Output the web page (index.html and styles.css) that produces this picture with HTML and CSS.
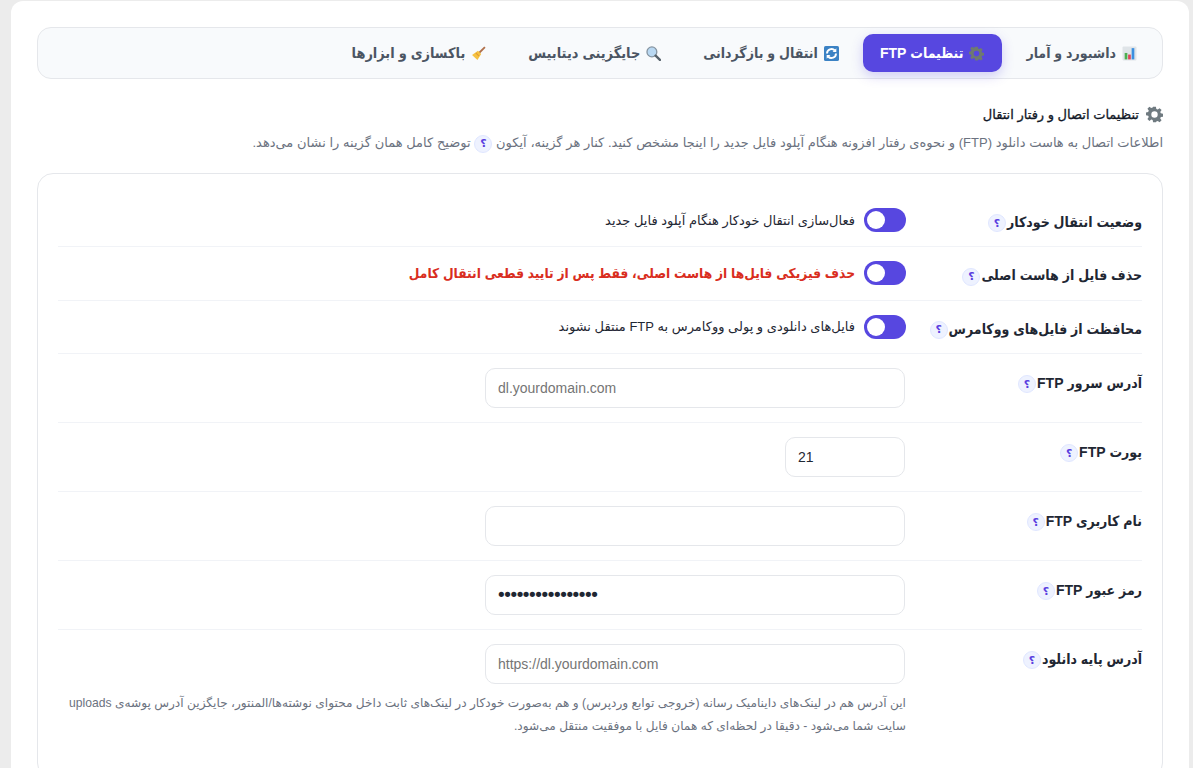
FILE: index.html
```html
<!DOCTYPE html>
<html lang="fa" dir="rtl">
<head>
<meta charset="utf-8">
<title>تنظیمات FTP</title>
<link rel="stylesheet" href="styles.css">
</head>
<body>
<main class="panel">
  <nav class="tabs">
    <a class="tab"><svg class="ico" viewBox="0 0 14 14"><rect x="0.5" y="0.5" width="13" height="13" rx="1" fill="#dfe4e8"/><rect x="2.500" y="6.500" width="2.500" height="6" fill="#4caf50"/><rect x="5.700" y="8" width="2.500" height="4.500" fill="#e0445a"/><rect x="9" y="2" width="2.500" height="10.500" fill="#3b8fe0"/></svg>داشبورد و آمار</a>
    <a class="tab active"><svg class="ico" viewBox="0 0 24 24"><path fill="#6f7a70" fill-rule="evenodd" d="M10 1h4l.6 3.100 2 .8L19.200 3 22 5.800l-1.900 2.600.8 2 3.100.6v4l-3.100.6-.8 2 1.900 2.600-2.800 2.800-2.600-1.900-2 .8L14 23h-4l-.6-3.100-2-.8L4.800 21 2 18.200l1.900-2.600-.8-2L0 13V9l3.100-.6.8-2L2 3.800 4.800 1l2.600 1.900 2-.8z M12 7.500a4.500 4.500 0 1 0 0 9 4.500 4.500 0 0 0 0-9z"/></svg>تنظیمات FTP</a>
    <a class="tab"><svg class="ico" viewBox="0 0 14 14"><rect width="14" height="14" rx="1.500" fill="#3b82c4"/><path d="M2.800 7a4.200 4.200 0 0 1 7.300-2.800M11.200 7a4.200 4.200 0 0 1-7.300 2.800" fill="none" stroke="#fff" stroke-width="1.800"/><path d="M11.500 2v3.500H8zM2.500 12V8.500H6z" fill="#fff"/></svg>انتقال و بازگردانی</a>
    <a class="tab tab-wide"><svg class="ico" viewBox="0 0 14 14"><circle cx="5.500" cy="5.500" r="4.600" fill="#b9d8f2" stroke="#8594a1" stroke-width="1.200"/><path d="M9 9l4 4" stroke="#56616b" stroke-width="2.200" stroke-linecap="round"/></svg>جایگزینی دیتابیس</a>
    <a class="tab tab-wide"><svg class="ico" viewBox="0 0 14 14"><path d="M13 1L7 7" stroke="#b0704a" stroke-width="1.700"/><path d="M6.500 4.500l3 3-3.500 5.500L1 8.500z" fill="#f5c242"/><path d="M4.500 6.500l3 3" stroke="#e39a2e"/></svg>باکسازی و ابزارها</a>
  </nav>

  <header class="intro">
    <h2 class="intro-title"><svg class="gear" viewBox="0 0 24 24"><path fill="#6f7a80" fill-rule="evenodd" d="M10 1h4l.6 3.100 2 .8L19.200 3 22 5.800l-1.900 2.600.8 2 3.100.6v4l-3.100.6-.8 2 1.900 2.600-2.800 2.800-2.600-1.900-2 .8L14 23h-4l-.6-3.100-2-.8L4.800 21 2 18.200l1.900-2.600-.8-2L0 13V9l3.100-.6.8-2L2 3.800 4.800 1l2.600 1.900 2-.8z M12 7.500a4.500 4.500 0 1 0 0 9 4.500 4.500 0 0 0 0-9z"/></svg>تنظیمات اتصال و رفتار انتقال</h2>
    <p class="intro-text">اطلاعات اتصال به هاست دانلود (FTP) و نحوه‌ی رفتار افزونه هنگام آپلود فایل جدید را اینجا مشخص کنید. کنار هر گزینه، آیکون <span class="help">؟</span> توضیح کامل همان گزینه را نشان می‌دهد.</p>
  </header>

  <section class="card">
    <div class="row row-toggle">
      <div class="label">وضعیت انتقال خودکار<span class="help">؟</span></div>
      <div class="field toggle-field"><span class="switch"></span><span class="switch-text">فعال‌سازی انتقال خودکار هنگام آپلود فایل جدید</span></div>
    </div>
    <div class="row row-toggle">
      <div class="label">حذف فایل از هاست اصلی<span class="help">؟</span></div>
      <div class="field toggle-field"><span class="switch"></span><span class="switch-text danger">حذف فیزیکی فایل‌ها از هاست اصلی، فقط پس از تایید قطعی انتقال کامل</span></div>
    </div>
    <div class="row row-toggle">
      <div class="label">محافظت از فایل‌های ووکامرس<span class="help">؟</span></div>
      <div class="field toggle-field"><span class="switch"></span><span class="switch-text">فایل‌های دانلودی و پولی ووکامرس به FTP منتقل نشوند</span></div>
    </div>
    <div class="row">
      <div class="label">آدرس سرور FTP<span class="help">؟</span></div>
      <div class="field"><input class="input" dir="ltr" type="text" placeholder="dl.yourdomain.com"></div>
    </div>
    <div class="row">
      <div class="label">پورت FTP<span class="help">؟</span></div>
      <div class="field"><input class="input input-short" dir="ltr" type="text" value="21"></div>
    </div>
    <div class="row">
      <div class="label">نام کاربری FTP<span class="help">؟</span></div>
      <div class="field"><input class="input" dir="ltr" type="text"></div>
    </div>
    <div class="row">
      <div class="label">رمز عبور FTP<span class="help">؟</span></div>
      <div class="field"><input class="input input-pass" dir="ltr" type="password" value="abcdefghijklmnop"></div>
    </div>
    <div class="row row-last">
      <div class="label">آدرس پایه دانلود<span class="help">؟</span></div>
      <div class="field">
        <input class="input" dir="ltr" type="text" placeholder="https://dl.yourdomain.com">
        <p class="note">این آدرس هم در لینک‌های داینامیک رسانه (خروجی توابع وردپرس) و هم به‌صورت خودکار در لینک‌های ثابت داخل محتوای نوشته‌ها/المنتور، جایگزین آدرس پوشه‌ی uploads سایت شما می‌شود - دقیقا در لحظه‌ای که همان فایل با موفقیت منتقل می‌شود.</p>
      </div>
    </div>
  </section>
</main>
</body>
</html>
```
FILE: styles.css
```css
* { box-sizing: border-box; }
html, body { height: 100%; }
body {
  margin: 0;
  padding: 1px 4px 0 11px;
  background: #ececec;
  font-family: "Liberation Sans", "DejaVu Sans", sans-serif;
  color: #1f2733;
  overflow: hidden;
}
.panel {
  background: #fff;
  border-radius: 12px 12px 0 0;
  padding: 26px 26px 0;
  min-height: 800px;
}
.tabs {
  display: flex;
  justify-content: flex-start;
  align-items: center;
  height: 52px;
  padding: 0 7px;
  gap: 6px;
  background: #f8fafc;
  border: 1px solid #e5e7eb;
  border-radius: 14px;
}
.tab {
  display: flex;
  align-items: center;
  gap: 6px;
  height: 38px;
  padding: 0 18px;
  border-radius: 10px;
  font-family: "Liberation Sans", "DejaVu Sans Condensed", sans-serif;
  font-size: 14px;
  font-weight: 700;
  color: #4b5563;
}
.tab-wide { font-size: 14.400px; }
.tab.active {
  padding-left: 17px;
  background: #5747e0;
  color: #fff;
  box-shadow: 0 4px 12px rgba(87, 71, 224, .25);
}
.ico { width: 15px; height: 15px; flex: none; }
.intro { margin-top: 25px; }
.intro-title {
  display: flex;
  align-items: center;
  gap: 7px;
  margin: 0;
  height: 20px;
  font-size: 13px;
  font-weight: 400;
  color: #111827;
  -webkit-text-stroke: .3px #111827;
}
.gear { width: 17px; height: 17px; flex: none; }
.intro-text {
  margin: 9px 0 0;
  font-size: 13px;
  line-height: 20px;
  word-spacing: .1px;
  color: #6b7280;
}
.help {
  display: inline-flex;
  align-items: center;
  justify-content: center;
  width: 18px;
  height: 18px;
  border-radius: 50%;
  background: #eef2ff;
  border: 1px solid #e0e7ff;
  color: #5b3fe0;
  font-family: "DejaVu Sans", sans-serif;
  font-size: 11px;
  font-weight: 700;
  vertical-align: middle;
}
.card {
  margin-top: 20px;
  border: 1px solid #e5e7eb;
  border-radius: 16px;
  padding: 20px 20px 26px;
}
.row {
  display: grid;
  grid-template-columns: 236px 1fr;
  padding: 14px 0;
  border-bottom: 1px solid #f1f3f7;
}
.row-last { border-bottom: 0; }
.row-toggle { height: 53.330px; }
.label {
  font-family: "Liberation Sans", "DejaVu Sans Condensed", sans-serif;
  font-size: 14px;
  font-weight: 700;
  color: #1f2733;
  padding-top: 7px;
}
.row-toggle .label { padding-top: 6px; }
.label .help { margin-right: 1px; }
.toggle-field { display: flex; align-items: center; gap: 9px; }
.switch {
  position: relative;
  flex: none;
  width: 42px;
  height: 24px;
  border-radius: 12px;
  background: #5747e0;
}
.switch::after {
  content: "";
  position: absolute;
  top: 3px;
  right: 21px;
  width: 18px;
  height: 18px;
  border-radius: 50%;
  background: #fff;
}
.switch-text { font-size: 13px; color: #1f2733; }
.danger {
  font-family: "Liberation Sans", "DejaVu Sans Condensed", sans-serif;
  font-size: 13.650px;
  color: #d92d20;
  font-weight: 700;
}
.input {
  display: block;
  width: 420px;
  height: 40px;
  margin-right: 1px;
  padding: 0 12px;
  background: #fff;
  border: 1px solid #e5e7eb;
  border-radius: 10px;
  font-family: "Liberation Sans", sans-serif;
  font-size: 14px;
  color: #1f2733;
  outline: none;
}
.input-short { width: 120px; }
.input-pass { font-family: "DejaVu Sans", sans-serif; font-size: 18px; letter-spacing: -4.400px; padding-left: 10px; }
.input::placeholder { color: #757575; opacity: 1; }
.note {
  margin: 8px 0 0;
  font-size: 12.150px;
  line-height: 23px;
  color: #6b7280;
}
```
